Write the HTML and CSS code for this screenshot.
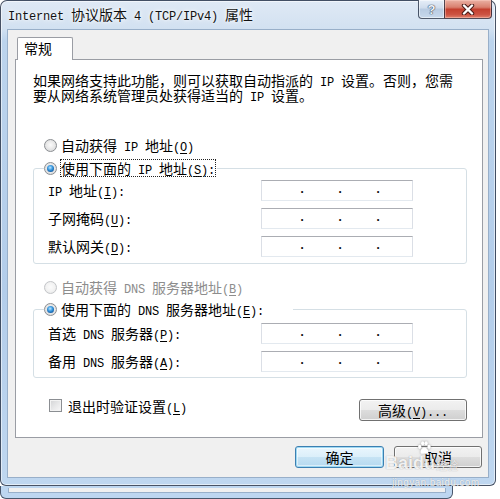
FILE: index.html
```html
<!DOCTYPE html>
<html>
<head>
<meta charset="utf-8">
<title>Internet 协议版本 4 (TCP/IPv4) 属性</title>
<link rel="stylesheet" href="styles.css">
</head>
<body>
<div class="screen">
  <div class="win">
    <div class="titlebar">
      <div class="title"><span class="m">Internet </span>协议版本<span class="m"> 4 (TCP/IPv4) </span>属性</div>
      <div class="caps">
        <div class="cap help"><span class="q">?</span></div>
        <div class="cap close">
          <svg width="14" height="11" viewBox="0 0 14 11"><path d="M3 1.5 L11 9.5 M11 1.5 L3 9.5" stroke="#4a1c18" stroke-width="4.4" stroke-linecap="round"/><path d="M3 1.5 L11 9.5 M11 1.5 L3 9.5" stroke="#fff" stroke-width="2.4" stroke-linecap="round"/></svg>
        </div>
      </div>
    </div>
    <div class="client">
      <div class="tabs"><div class="tab">常规</div></div>
      <div class="panel">
        <p class="intro">如果网络支持此功能，则可以获取自动指派的<span class="m"> IP </span>设置。否则，您需<br>要从网络系统管理员处获得适当的<span class="m"> IP </span>设置。</p>

        <div class="opt first"><span class="rb"></span><span>自动获得<span class="m"> IP </span>地址<span class="m">(<u>O</u>)</span></span></div>

        <fieldset class="grp g1">
          <legend><span class="rb on"></span><span class="focus">使用下面的<span class="m"> IP </span>地址<span class="m">(<u>S</u>):</span></span></legend>
          <div class="rows">
            <div class="row"><span class="lbl"><span class="m">IP </span>地址<span class="m">(<u>I</u>):</span></span><div class="ip"><span class="s1"></span><span class="d">.</span><span class="s"></span><span class="d">.</span><span class="s"></span><span class="d">.</span></div></div>
            <div class="row"><span class="lbl">子网掩码<span class="m">(<u>U</u>):</span></span><div class="ip"><span class="s1"></span><span class="d">.</span><span class="s"></span><span class="d">.</span><span class="s"></span><span class="d">.</span></div></div>
            <div class="row"><span class="lbl">默认网关<span class="m">(<u>D</u>):</span></span><div class="ip"><span class="s1"></span><span class="d">.</span><span class="s"></span><span class="d">.</span><span class="s"></span><span class="d">.</span></div></div>
          </div>
        </fieldset>

        <div class="opt dis"><span class="rb off"></span><span>自动获得<span class="m"> DNS </span>服务器地址<span class="m">(<u>B</u>)</span></span></div>

        <fieldset class="grp g2">
          <legend><span class="rb on"></span><span>使用下面的<span class="m"> DNS </span>服务器地址<span class="m">(<u>E</u>):</span></span></legend>
          <div class="rows">
            <div class="row"><span class="lbl">首选<span class="m"> DNS </span>服务器<span class="m">(<u>P</u>):</span></span><div class="ip"><span class="s1"></span><span class="d">.</span><span class="s"></span><span class="d">.</span><span class="s"></span><span class="d">.</span></div></div>
            <div class="row"><span class="lbl">备用<span class="m"> DNS </span>服务器<span class="m">(<u>A</u>):</span></span><div class="ip"><span class="s1"></span><span class="d">.</span><span class="s"></span><span class="d">.</span><span class="s"></span><span class="d">.</span></div></div>
          </div>
        </fieldset>

        <div class="bottom">
          <span class="cb"></span><span class="cbl">退出时验证设置<span class="m">(<u>L</u>)</span></span>
          <button class="btn adv">高级<span class="m">(<u>V</u>)...</span></button>
        </div>
      </div>
      <div class="actions">
        <button class="btn ok">确定</button>
        <button class="btn cancel">取消</button>
      </div>
    </div>
  </div>
  <div class="bgwin"><div class="bgclient"></div></div>

  <div class="wm">
    <div class="wm1"><span class="wmb">Bai</span><span class="dup"><svg class="paw" width="14" height="14" viewBox="0 0 18 18"><ellipse cx="3.5" cy="7.5" rx="2.1" ry="2.7" fill="#fff"/><ellipse cx="7.3" cy="3" rx="2.1" ry="2.7" fill="#fff"/><ellipse cx="11.7" cy="3" rx="2.1" ry="2.7" fill="#fff"/><ellipse cx="15.5" cy="7.5" rx="2.1" ry="2.7" fill="#fff"/><path d="M9.5 8.5 C6.5 8.5 4.5 12 4.5 14 C4.5 16.8 7 16.8 9.5 16 C12 16.8 14.5 16.8 14.5 14 C14.5 12 12.5 8.5 9.5 8.5 Z" fill="#fff"/></svg><span class="wmb du">du</span></span><span class="wmcn">经验</span></div>
    <div class="wm2">jingyan.baidu.com</div>
  </div>
</div>
</body>
</html>
```

FILE: styles.css
```css
* { box-sizing: border-box; }
html, body { margin: 0; padding: 0; }
body {
  width: 500px;
  height: 499px;
  overflow: hidden;
  background: #ffffff;
  font-family: "Noto Sans CJK SC", sans-serif;
  font-size: 14px;
  color: #000;
}
.screen { position: relative; width: 500px; height: 499px; }

.m {
  font-family: "Liberation Mono", monospace;
  font-size: 12px;
  letter-spacing: -0.2px;
  line-height: 0;
}
u { text-decoration: underline; text-underline-offset: 2px; }

/* main window frame */
.win {
  width: 496px;
  height: 486px;
  border: 1px solid rgba(35, 45, 65, 0.8);
  border-radius: 7px 7px 6px 6px;
  padding: 0 6px 7px 6px;
  background: linear-gradient(180deg, #dfe9f5 0px, #d2e1f1 28px, #bcd4ed 40px, #b3cdea 60%, #bfd7f0 100%);
  box-shadow: inset 0 0 0 1px rgba(255, 255, 255, 0.55);
  display: flex;
  flex-direction: column;
}
.titlebar {
  height: 28px;
  display: flex;
  align-items: flex-start;
  margin-right: -3px;
}
.title {
  flex: 1;
  padding-left: 1px;
  line-height: 27px;
  white-space: nowrap;
  color: #111;
  text-shadow: 0 0 6px #fff, 0 0 3px #fff;
}
.caps { display: flex; margin-top: -1px; }
.cap {
  height: 19px;
  border: 1px solid rgba(30, 40, 60, 0.75);
  border-top: none;
  display: flex;
  align-items: center;
  justify-content: center;
}
.help {
  width: 26px;
  border-right: none;
  border-radius: 0 0 0 4px;
  background: linear-gradient(180deg, #e6eef8 0%, #cfdcec 45%, #b8cbe2 50%, #c8d9ec 100%);
  box-shadow: inset 0 0 0 1px rgba(255, 255, 255, 0.5);
}
.q {
  font-family: "Liberation Sans", sans-serif;
  font-weight: bold;
  font-size: 13px;
  line-height: 13px;
  color: #eef3f9;
  text-shadow: 0 0 1px #3d4b5f, 0 0 1px #3d4b5f, 0 0 1px #3d4b5f;
}
.close {
  width: 48px;
  border-radius: 0 0 4px 0;
  background: linear-gradient(180deg, #eab1a4 0%, #d9806f 40%, #c4402f 52%, #cc5242 80%, #e0806c 100%);
  box-shadow: inset 0 0 0 1px rgba(255, 210, 200, 0.45);
}

/* client area */
.client {
  flex: 1;
  border: 1px solid #98afc9;
  background: #f0f0f0;
  padding: 7px 5px 0 7px;
  display: flex;
  flex-direction: column;
}
.tabs {
  height: 22px;
  display: flex;
  padding-left: 2px;
  position: relative;
  z-index: 1;
}
.tab {
  width: 56px;
  height: 23px;
  border: 1px solid #9a9da4;
  border-bottom: none;
  border-radius: 2px 2px 0 0;
  background: #fff;
  padding-left: 6px;
  line-height: 21px;
}
.panel {
  width: 468px;
  height: 379px;
  border: 1px solid #9a9da4;
  background: #fff;
  padding: 13px 15px 0 17px;
}
.intro {
  margin: 0;
  line-height: 15px;
  white-space: nowrap;
}

.opt {
  display: flex;
  align-items: center;
  height: 20px;
  line-height: 20px;
  padding-left: 11px;
  white-space: nowrap;
}
.opt.first { margin-top: 32px; }
.opt.dis { margin-top: 13px; color: #8d8d8d; }

.rb {
  flex: none;
  position: relative;
  width: 13px;
  height: 13px;
  margin-right: 4px;
  border-radius: 50%;
  border: 1px solid #8b8e92;
  background: radial-gradient(circle at 50% 45%, #fbfbfb 0%, #eaeaea 45%, #cfd1d3 100%);
}
.rb.on::after {
  content: "";
  position: absolute;
  left: 2px;
  top: 2px;
  width: 7px;
  height: 7px;
  border-radius: 50%;
  background: radial-gradient(circle at 45% 38%, #bfe6ff 0%, #3c9be0 40%, #115ca6 75%, #0a3d73 100%);
}
.rb.off {
  border-color: #c3c5c8;
  background: radial-gradient(circle at 50% 45%, #fbfbfb 0%, #f3f3f3 50%, #e2e3e4 100%);
}

.grp {
  margin: 3px 0 0;
  padding: 0 0 6px;
  border: 1px solid #d5dfe5;
  border-radius: 3px;
  min-width: 0;
}
.grp legend {
  margin-left: 10px;
  padding: 0 2px 0 0;
  height: 20px;
  display: flex;
  align-items: center;
  white-space: nowrap;
  line-height: 16px;
}
.g2 { margin-top: 2px; padding-bottom: 5px; }
.g2 legend { padding-right: 29px; }
.focus { outline: 1px dotted #222; outline-offset: 0px; }

.rows {
  display: flex;
  flex-direction: column;
  gap: 7px;
  padding: 2px 0 0 14px;
}
.g2 .rows { padding-top: 4px; }
.row {
  display: flex;
  align-items: center;
  height: 21px;
}
.lbl { width: 213px; white-space: nowrap; line-height: 21px; }
.ip {
  width: 152px;
  height: 21px;
  border: 1px solid #dbdfe6;
  border-top-color: #abadb3;
  border-bottom-color: #e3e9ef;
  background: #fff;
  display: flex;
  align-items: flex-start;
}
.ip .s1 { width: 36px; flex: none; }
.ip .s { width: 30px; flex: none; }
.ip .d {
  width: 8px;
  flex: none;
  text-align: center;
  font-family: "Liberation Mono", monospace;
  font-weight: bold;
  font-size: 12px;
  line-height: 19px;
  color: #111;
}

.bottom {
  margin-top: 21px;
  height: 22px;
  display: flex;
  align-items: flex-start;
  padding-left: 16px;
  white-space: nowrap;
}
.cb {
  flex: none;
  width: 13px;
  height: 13px;
  margin-right: 6px;
  border: 1px solid #8b8e92;
  background: linear-gradient(135deg, #d2d3d5 0%, #e9e9ea 55%, #f8f8f8 100%);
  box-shadow: inset 0 0 0 1px #f3f3f3;
}
.cbl { line-height: 14px; }

.btn {
  height: 22px;
  padding: 0;
  border: 1px solid #707070;
  border-radius: 3px;
  background: linear-gradient(180deg, #f2f2f2 0%, #ebebeb 50%, #dddddd 51%, #cfcfcf 100%);
  box-shadow: inset 0 0 0 1px rgba(255, 255, 255, 0.75);
  font-family: "Noto Sans CJK SC", sans-serif;
  font-size: 14px;
  line-height: 18px;
  color: #000;
  text-align: center;
}
.adv { margin-left: auto; width: 108px; }

.actions {
  margin-top: 8px;
  display: flex;
  justify-content: flex-end;
  gap: 10px;
  padding-right: 1px;
}
.ok {
  width: 89px;
  border-color: #3c7fb1;
  background: linear-gradient(180deg, #eaf6fd 0%, #dbeffa 50%, #c6e3f4 51%, #b5d9ef 100%);
  box-shadow: inset 0 0 0 1px #9fd9f3, inset 0 0 0 2px rgba(255, 255, 255, 0.5);
}
.cancel { width: 88px; }

/* window behind */
.bgwin {
  width: 453px;
  height: 13px;
  border: 1px solid rgba(35, 45, 65, 0.75);
  border-top: none;
  border-radius: 0 0 6px 6px;
  background: #bdd6f0;
  padding: 2px 6px 0 7px;
}
.bgclient {
  height: 5px;
  background: #f0f0f0;
  border: 1px solid #98afc9;
  border-top: none;
}

/* watermark overlay */
.wm {
  position: absolute;
  left: 385px;
  top: 441px;
  color: rgba(255, 255, 255, 0.88);
  text-shadow: 0 0 1px rgba(70, 70, 70, 0.5);
  pointer-events: none;
}
.wm1 { display: flex; align-items: flex-end; }
.wmb {
  font-family: "Liberation Sans", sans-serif;
  font-weight: bold;
  font-size: 18px;
  line-height: 20px;
}
.dup { display: flex; flex-direction: column; align-items: center; }
.paw { filter: drop-shadow(0 0 1px rgba(70, 70, 70, 0.5)); }
.du { margin-top: -2px; }
.wmcn { font-size: 11px; line-height: 16px; margin-left: 1px; }
.wm2 {
  font-family: "Liberation Sans", sans-serif;
  font-size: 10px;
  line-height: 12px;
  letter-spacing: 0.4px;
  margin: 4px 0 0 7px;
}
```
